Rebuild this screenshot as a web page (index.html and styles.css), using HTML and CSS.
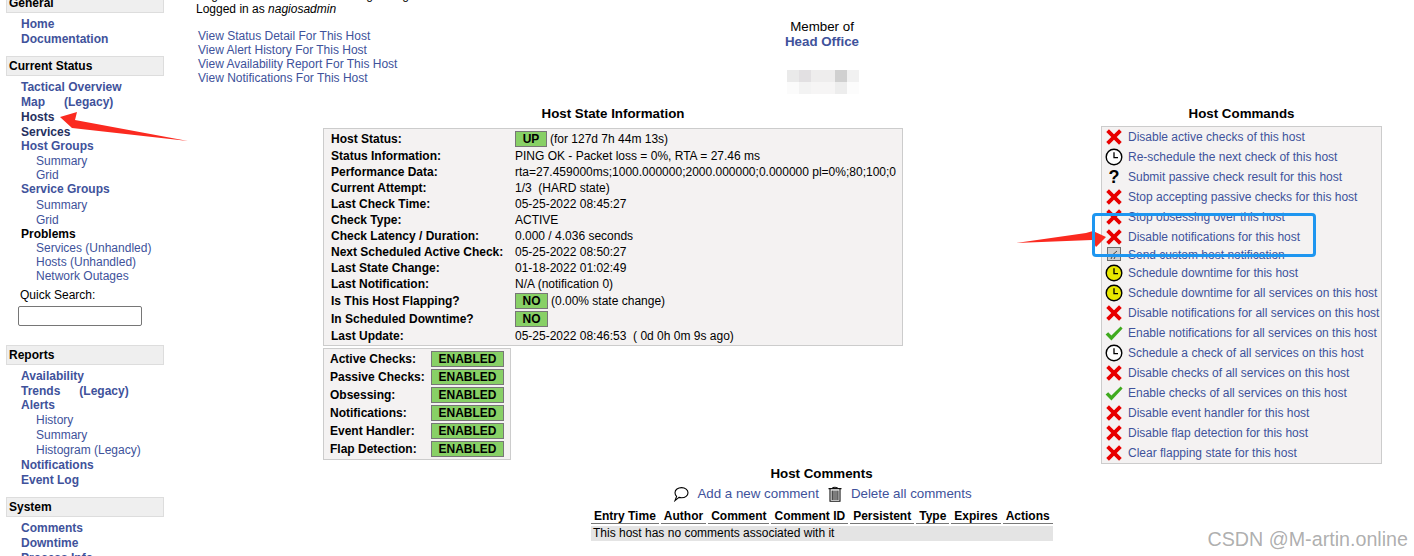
FILE: index.html
```html
<!DOCTYPE html>
<html lang="en">
<head>
<meta charset="utf-8">
<title>Host Information</title>
<link rel="stylesheet" href="styles.css">
</head>
<body>
<svg class="defs" width="0" height="0" aria-hidden="true">
  <symbol id="x" viewBox="0 0 18 18"><path d="M2.6 2.6 15.4 15.4M15.4 2.6 2.6 15.4" fill="none" stroke="#e80000" stroke-width="3.8"/></symbol>
  <symbol id="clock" viewBox="0 0 18 18"><circle cx="9" cy="9" r="7.8" fill="#fff" stroke="#000" stroke-width="1.4"/><path d="M9 4.2V9.6H13" fill="none" stroke="#000" stroke-width="1.3"/></symbol>
  <symbol id="yclock" viewBox="0 0 18 18"><circle cx="9" cy="9" r="7.8" fill="#e8e800" stroke="#000" stroke-width="1.4"/><path d="M9 4.2V9.6H13" fill="none" stroke="#000" stroke-width="1.3"/></symbol>
  <symbol id="check" viewBox="0 0 18 18"><path d="M.6 10.6 3.2 8.2 6.4 11.4 15.6 2.4 17.6 4.4 6.4 16.4Z" fill="#3faa1e"/></symbol>
  <symbol id="note" viewBox="0 0 18 18"><rect x="2.5" y="1.5" width="13" height="13" fill="#cfcfcf" stroke="#6f6f6f"/><path d="M5 11 12 5M6 13 7 11M9 13 10 11" fill="none" stroke="#444" stroke-width="1"/></symbol>
  <symbol id="bubble" viewBox="0 0 16 16"><path d="M8.6 1.6C12.2 1.6 15 3.8 15 6.7 15 9.6 12.2 11.8 8.6 11.8 7.6 11.8 6.8 11.6 6 11.4L2 14.6 3.6 10.4C2.6 9.4 2 8.1 2 6.7 2 3.8 5 1.6 8.6 1.6Z" fill="#fff" stroke="#000" stroke-width="1.1"/></symbol>
  <symbol id="trash" viewBox="0 0 16 16"><path d="M1.5 2.6H14.5M5.5 2.4C5.5.8 10.5.8 10.5 2.4M3 3V15.2H13V3M5.2 4.5V14M7 4.5V14M9 4.5V14M10.9 4.5V14" fill="none" stroke="#111" stroke-width="1.1"/></symbol>
</svg>

<div class="page">
  <nav class="sidebar">
    <section class="nav-section">
      <h2 class="nav-head">General</h2>
      <ul class="nav-list">
        <li class="n"><a class="l1" href="#">Home</a></li>
        <li class="n"><a class="l1" href="#">Documentation</a></li>
      </ul>
    </section>
    <section class="nav-section">
      <h2 class="nav-head">Current Status</h2>
      <ul class="nav-list">
        <li class="n"><a class="l1" href="#">Tactical Overview</a></li>
        <li class="n"><a class="l1" href="#">Map<span class="legacy-map">(Legacy)</span></a></li>
        <li class="n"><a class="l1 dark" href="#">Hosts</a></li>
        <li class="n"><a class="l1 dark" href="#">Services</a></li>
        <li class="n s"><a class="l1" href="#">Host Groups</a></li>
        <li class="n"><a class="l2" href="#">Summary</a></li>
        <li class="n s"><a class="l2" href="#">Grid</a></li>
        <li class="n s1"><a class="l1" href="#">Service Groups</a></li>
        <li class="n"><a class="l2" href="#">Summary</a></li>
        <li class="n"><a class="l2" href="#">Grid</a></li>
        <li class="n s"><span class="l1 black">Problems</span></li>
        <li class="n s"><a class="l2" href="#">Services (Unhandled)</a></li>
        <li class="n s"><a class="l2" href="#">Hosts (Unhandled)</a></li>
        <li class="n s"><a class="l2" href="#">Network Outages</a></li>
      </ul>
      <div class="search">
        <label class="search-label" for="q">Quick Search:</label>
        <input class="search-input" id="q" type="text">
      </div>
    </section>
    <section class="nav-section">
      <h2 class="nav-head">Reports</h2>
      <ul class="nav-list">
        <li class="n"><a class="l1" href="#">Availability</a></li>
        <li class="n"><a class="l1" href="#">Trends<span class="legacy-trends">(Legacy)</span></a></li>
        <li class="n s"><a class="l1" href="#">Alerts</a></li>
        <li class="n"><a class="l2" href="#">History</a></li>
        <li class="n"><a class="l2" href="#">Summary</a></li>
        <li class="n"><a class="l2" href="#">Histogram (Legacy)</a></li>
        <li class="n"><a class="l1" href="#">Notifications</a></li>
        <li class="n"><a class="l1" href="#">Event Log</a></li>
      </ul>
    </section>
    <section class="nav-section">
      <h2 class="nav-head">System</h2>
      <ul class="nav-list">
        <li class="n"><a class="l1" href="#">Comments</a></li>
        <li class="n"><a class="l1" href="#">Downtime</a></li>
        <li class="n"><a class="l1" href="#">Process Info</a></li>
      </ul>
    </section>
  </nav>

  <main class="main">
    <div class="top">
      <div class="top-left">
        <div class="info-line">Nagios® Core™ 4.4.6 - www.nagios.org</div>
        <div class="info-line">Logged in as <i>nagiosadmin</i></div>
        <ul class="view-links">
          <li><a href="#">View Status Detail For This Host</a></li>
          <li><a href="#">View Alert History For This Host</a></li>
          <li><a href="#">View Availability Report For This Host</a></li>
          <li><a href="#">View Notifications For This Host</a></li>
        </ul>
      </div>
      <div class="member">
        <div class="member-of">Member of</div>
        <a class="member-group" href="#">Head Office</a>
        <svg class="blur" width="72" height="24" viewBox="0 0 72 24" aria-hidden="true">
          <rect width="12" height="12" fill="#eaeaea"/>
          <rect x="12" width="12" height="12" fill="#e2e0e2"/>
          <rect x="24" width="24" height="12" fill="#eeeded"/>
          <rect x="48" width="12" height="12" fill="#d0d0d0"/>
          <rect x="60" width="12" height="12" fill="#f1f1f1"/>
          <rect y="12" width="12" height="12" fill="#fbfbfb"/>
          <rect x="12" y="12" width="12" height="12" fill="#f3f3f3"/>
          <rect x="24" y="12" width="24" height="12" fill="#f6f5f5"/>
          <rect x="48" y="12" width="12" height="12" fill="#ededed"/>
          <rect x="60" y="12" width="12" height="12" fill="#fcfcfc"/>
        </svg>
      </div>
    </div>

    <div class="columns">
      <div class="state-col">
        <h3 class="title state-title">Host State Information</h3>
        <div class="panel state-panel">
          <div class="row tall"><span class="label">Host Status:</span><span class="badge up">UP</span><span class="after">(for 127d 7h 44m 13s)</span></div>
          <div class="row"><span class="label">Status Information:</span><span>PING OK - Packet loss = 0%, RTA = 27.46 ms</span></div>
          <div class="row"><span class="label">Performance Data:</span><span>rta=27.459000ms;1000.000000;2000.000000;0.000000 pl=0%;80;100;0</span></div>
          <div class="row"><span class="label">Current Attempt:</span><span>1/3&nbsp;&nbsp;(HARD state)</span></div>
          <div class="row"><span class="label">Last Check Time:</span><span>05-25-2022 08:45:27</span></div>
          <div class="row"><span class="label">Check Type:</span><span>ACTIVE</span></div>
          <div class="row"><span class="label">Check Latency / Duration:</span><span>0.000&nbsp;/&nbsp;4.036 seconds</span></div>
          <div class="row"><span class="label">Next Scheduled Active Check:&nbsp;&nbsp;</span><span>05-25-2022 08:50:27</span></div>
          <div class="row"><span class="label">Last State Change:</span><span>01-18-2022 01:02:49</span></div>
          <div class="row"><span class="label">Last Notification:</span><span>N/A (notification 0)</span></div>
          <div class="row tall"><span class="label">Is This Host Flapping?</span><span class="badge no">NO</span><span class="after">(0.00% state change)</span></div>
          <div class="row tall"><span class="label">In Scheduled Downtime?</span><span class="badge no">NO</span></div>
          <div class="row"><span class="label">Last Update:</span><span>05-25-2022 08:46:53&nbsp;&nbsp;( 0d 0h 0m 9s ago)</span></div>
        </div>
        <div class="panel checks-panel">
          <div class="row tall"><span class="check-label">Active Checks:</span><span class="badge enabled">ENABLED</span></div>
          <div class="row tall"><span class="check-label">Passive Checks:</span><span class="badge enabled">ENABLED</span></div>
          <div class="row tall"><span class="check-label">Obsessing:</span><span class="badge enabled">ENABLED</span></div>
          <div class="row tall"><span class="check-label">Notifications:</span><span class="badge enabled">ENABLED</span></div>
          <div class="row tall"><span class="check-label">Event Handler:</span><span class="badge enabled">ENABLED</span></div>
          <div class="row tall"><span class="check-label">Flap Detection:</span><span class="badge enabled">ENABLED</span></div>
        </div>
      </div>

      <div class="cmd-col">
        <h3 class="title cmd-title">Host Commands</h3>
        <div class="panel cmd-panel">
          <div class="cmd"><svg class="ico"><use href="#x"/></svg><a href="#">Disable active checks of this host</a></div>
          <div class="cmd"><svg class="ico"><use href="#clock"/></svg><a href="#">Re-schedule the next check of this host</a></div>
          <div class="cmd"><span class="ico q">?</span><a href="#">Submit passive check result for this host</a></div>
          <div class="cmd"><svg class="ico"><use href="#x"/></svg><a href="#">Stop accepting passive checks for this host</a></div>
          <div class="cmd"><svg class="ico"><use href="#x"/></svg><a href="#">Stop obsessing over this host</a></div>
          <div class="cmd"><svg class="ico"><use href="#x"/></svg><a href="#">Disable notifications for this host</a></div>
          <div class="cmd short"><svg class="ico"><use href="#note"/></svg><a href="#">Send custom host notification</a></div>
          <div class="cmd"><svg class="ico"><use href="#yclock"/></svg><a href="#">Schedule downtime for this host</a></div>
          <div class="cmd"><svg class="ico"><use href="#yclock"/></svg><a href="#">Schedule downtime for all services on this host</a></div>
          <div class="cmd"><svg class="ico"><use href="#x"/></svg><a href="#">Disable notifications for all services on this host</a></div>
          <div class="cmd"><svg class="ico"><use href="#check"/></svg><a href="#">Enable notifications for all services on this host</a></div>
          <div class="cmd"><svg class="ico"><use href="#clock"/></svg><a href="#">Schedule a check of all services on this host</a></div>
          <div class="cmd"><svg class="ico"><use href="#x"/></svg><a href="#">Disable checks of all services on this host</a></div>
          <div class="cmd"><svg class="ico"><use href="#check"/></svg><a href="#">Enable checks of all services on this host</a></div>
          <div class="cmd"><svg class="ico"><use href="#x"/></svg><a href="#">Disable event handler for this host</a></div>
          <div class="cmd"><svg class="ico"><use href="#x"/></svg><a href="#">Disable flap detection for this host</a></div>
          <div class="cmd"><svg class="ico"><use href="#x"/></svg><a href="#">Clear flapping state for this host</a></div>
        </div>
      </div>
    </div>

    <div class="comments">
      <h3 class="title comments-title">Host Comments</h3>
      <div class="comment-links">
        <svg class="c-ico"><use href="#bubble"/></svg><a href="#">Add a new comment</a>
        <svg class="c-ico"><use href="#trash"/></svg><a href="#">Delete all comments</a>
      </div>
      <table class="comment-table">
        <thead>
          <tr><th>Entry Time</th><th>Author</th><th>Comment</th><th>Comment ID</th><th>Persistent</th><th>Type</th><th>Expires</th><th>Actions</th></tr>
        </thead>
        <tbody>
          <tr><td colspan="8">This host has no comments associated with it</td></tr>
        </tbody>
      </table>
    </div>
  </main>
</div>

<svg class="arrows" width="1414" height="556" aria-hidden="true">
  <polygon points="60,117 77,112 75,120 188,141 72,128" fill="#fb2a20"/>
  <polygon points="1016,243 1086,233 1093,231 1106,237 1096,247 1092,240" fill="#fb2a20"/>
</svg>
<div class="highlight"></div>
<div class="watermark">CSDN @M-artin.online</div>
</body>
</html>
```
FILE: styles.css
```css
* { box-sizing: border-box; }
html, body { margin: 0; padding: 0; height: 556px; overflow: hidden; background: #fff; }
body { position: relative; font: 12px/14px "Liberation Sans", Arial, sans-serif; color: #000; }
a { color: #40529b; text-decoration: none; }
ul { list-style: none; margin: 0; padding: 0; }
h2, h3 { margin: 0; }
.defs { position: absolute; }

.page { display: flex; margin-top: -7px; }

/* sidebar */
.sidebar { flex: none; width: 196px; padding-left: 6px; }
.nav-section { width: 158px; margin-bottom: 10px; }
.nav-head { height: 20px; padding-left: 2px; font-size: 12px; line-height: 18px; font-weight: bold; background: #efefef; border: 1px solid #ddd; }
.nav-list { margin-top: 3px; }
.n { height: 15px; padding-top: 1px; line-height: 14px; }
.n.s { height: 14px; padding-top: 0; line-height: 14px; }
.n.s1 { height: 15px; padding-top: 0; line-height: 14px; }
.l1 { display: block; padding-left: 15px; font-weight: bold; }
.l2 { display: block; padding-left: 30px; }
.dark { color: #25305f; }
.black { color: #000; }
.legacy-map { margin-left: 19px; }
.legacy-trends { margin-left: 19px; }
.search { display: flex; flex-direction: column; align-items: flex-start; padding: 5px 0 9px 12px; }
.search-label { padding-left: 2px; height: 14px; }
.search-input { width: 124px; height: 20px; margin-top: 4px; padding: 0; background: #fff; border: 1px solid #767676; border-radius: 2px; }

/* main */
.main { flex: none; width: 1218px; }
.top { display: flex; margin-top: -5px; height: 106px; }
.top-left { flex: none; width: 426px; }
.view-links { margin: 13px 0 0 2px; }
.member { flex: none; width: 400px; padding-top: 32px; display: flex; flex-direction: column; align-items: center; font-size: 13.33px; line-height: 14px; }
.member-group { font-weight: bold; padding-top: 1px; }
.blur { margin: 21px 0 0 2px; }

.columns { display: flex; margin-top: 12px; padding-left: 127px; }
.state-col { flex: none; width: 580px; }
.cmd-col { flex: none; width: 281px; margin-left: 198px; }
.title { font-size: 13.33px; line-height: 14px; font-weight: bold; text-align: center; }
.state-title { padding-top: 1px; margin-bottom: 7px; }
.cmd-title { padding-top: 1px; margin-bottom: 5px; }
.panel { background: #f4f2f2; border: 1px solid #ccc; }
.state-panel { padding: 1px 0 1px 7px; }
.row { display: flex; align-items: center; height: 16px; white-space: nowrap; }
.row.tall { height: 18px; }
.label { flex: none; width: 184px; font-weight: bold; }
.after { margin-left: 3px; }
.badge { display: block; height: 16px; line-height: 14px; text-align: center; font-weight: bold; background: #88d066; border: 1px solid #777; }
.up { width: 32px; }
.no { width: 33px; }
.enabled { width: 73px; }
.checks-panel { width: 188px; margin-top: 2px; padding: 1px 0 1px 6px; }
.check-label { flex: none; width: 101px; font-weight: bold; }

.cmd-panel { padding-left: 3px; }
.cmd { display: flex; align-items: center; height: 20px; white-space: nowrap; }
.cmd.short { height: 16px; }
.ico { flex: none; width: 18px; height: 18px; margin-right: 5px; }
.q { font-size: 18px; line-height: 18px; font-weight: bold; text-align: center; }

.comments { width: 461px; margin: 3px 0 0 395px; }
.comment-links { display: flex; justify-content: center; align-items: center; height: 18px; margin-top: 4px; padding-right: 6px; font-size: 13.33px; }
.c-ico { flex: none; width: 16px; height: 16px; margin: 0 8px; }
.comment-table { width: calc(100% + 2px); margin: 4px 0 0 -2px; border-collapse: separate; border-spacing: 2px; }
.comment-table th { padding: 0 3px; height: 14px; font-weight: bold; white-space: nowrap; border-bottom: 1px solid #777; }
.comment-table td { padding: 0 2px; height: 15px; line-height: 13px; background: #e4e4e4; }

/* annotations on top of the screenshot */
.arrows { position: absolute; left: 0; top: 0; pointer-events: none; }
.highlight { position: absolute; left: 1092px; top: 213px; width: 224px; height: 44px; border: 3px solid #1e96f0; border-radius: 4px; }
.watermark { position: absolute; right: 6px; top: 528px; font-size: 19.7px; line-height: 23px; color: rgba(130,130,130,.65); }
```
